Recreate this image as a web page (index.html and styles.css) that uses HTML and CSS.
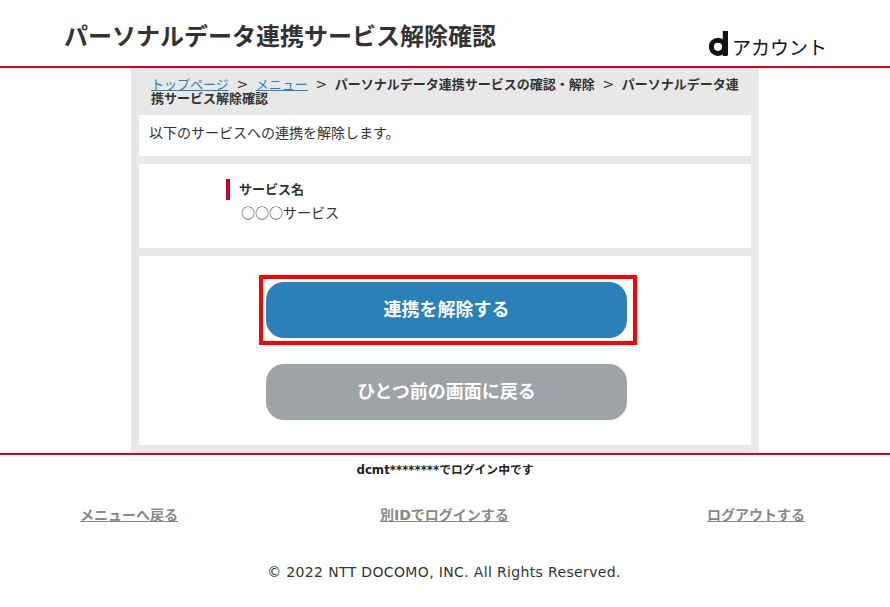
FILE: index.html
```html
<!DOCTYPE html>
<html lang="ja">
<head>
<meta charset="utf-8">
<title>パーソナルデータ連携サービス解除確認</title>
<link rel="stylesheet" href="styles.css">
</head>
<body>
<header class="header">
  <h1 class="title">パーソナルデータ連携サービス解除確認</h1>
  <div class="brand">
    <svg class="brand-d" width="19" height="25" viewBox="0 0 19 25"><circle cx="9" cy="15.800" r="6.600" fill="none" stroke="#111" stroke-width="5"/><path d="M13.800 0H19V21.500C19 23.500 18.800 24.500 18.400 25H13.800Z" fill="#111"/></svg>
    <span class="brand-text">アカウント</span>
  </div>
</header>
<main class="main">
  <nav class="crumbs"><a href="#">トップページ</a><span class="sep">&gt;</span><a href="#">メニュー</a><span class="sep">&gt;</span>パーソナルデータ連携サービスの確認・解除<span class="sep">&gt;</span>パーソナルデータ連携サービス解除確認</nav>
  <section class="box box-intro">以下のサービスへの連携を解除します。</section>
  <section class="box box-service">
    <h2 class="label">サービス名</h2>
    <p class="value">○○○サービス</p>
  </section>
  <section class="box box-actions">
    <div class="highlight"><a class="btn btn-blue" href="#">連携を解除する</a></div>
    <a class="btn btn-gray" href="#">ひとつ前の画面に戻る</a>
  </section>
</main>
<footer class="footer">
  <p class="login">dcmt********でログイン中です</p>
  <div class="links">
    <a href="#">メニューへ戻る</a>
    <a href="#">別IDでログインする</a>
    <a href="#">ログアウトする</a>
  </div>
  <p class="copy">© 2022 NTT DOCOMO, INC. All Rights Reserved.</p>
</footer>
</body>
</html>
```

FILE: styles.css
```css
* { box-sizing: border-box; }
html, body { margin: 0; padding: 0; }
body {
  background: #fff;
  color: #333;
  font-family: "DejaVu Sans", "Noto Sans CJK JP", sans-serif;
  height: 607px;
  overflow: hidden;
}
.header {
  height: 68px;
  border-bottom: 2px solid #c70025;
  display: flex;
  justify-content: space-between;
  padding: 0 63px 0 64px;
}
.title {
  margin: 19px 0 0;
  font-size: 24px;
  line-height: 32px;
  font-weight: 700;
  color: #333;
  font-family: "Noto Sans CJK JP", sans-serif;
}
.brand { display: flex; align-items: flex-start; padding-top: 31px; gap: 4px; }
.brand-text {
  font-family: "Noto Sans CJK JP", sans-serif;
  font-size: 19px;
  line-height: 32px;
  color: #111;
}
.main {
  width: 628px;
  height: 385px;
  margin: 0 0 0 131px;
  padding: 0 8px;
  background: #e8e8e8;
}
.crumbs {
  height: 47px;
  padding: 9px 8px 0 12px;
  font-size: 13px;
  line-height: 14px;
  font-weight: 700;
  color: #333;
  font-family: "Noto Sans CJK JP", sans-serif;
}
.crumbs a { color: #2a80b9; font-weight: 400; text-underline-offset: 1px; }
.sep {
  display: inline-block;
  width: 27px;
  text-align: center;
  font-family: "DejaVu Sans", sans-serif;
  font-size: 14px;
  font-weight: 400;
}
.box { background: #fff; margin-bottom: 8px; }
.box-intro {
  height: 41px;
  padding: 7px 10px;
  font-family: "Noto Sans CJK JP", sans-serif;
  font-size: 14px;
  line-height: 20px;
}
.box-service { height: 84px; padding: 15px 87px; font-family: "Noto Sans CJK JP", sans-serif; }
.label {
  margin: 0;
  height: 21px;
  border-left: 4px solid #c70025;
  padding-left: 9px;
  font-size: 13px;
  line-height: 19px;
  font-weight: 700;
}
.value { margin: 2px 0 0 15px; font-size: 14px; line-height: 20px; }
.box-actions {
  height: 189px;
  margin: 0;
  display: flex;
  flex-direction: column;
  align-items: flex-start;
  padding: 19px 0 0 120px;
  gap: 19px;
}
.highlight { border: 4px solid #f00; padding: 3px; width: 378px; height: 70px; }
.btn {
  display: flex;
  align-items: center;
  justify-content: center;
  width: 361px;
  height: 56px;
  padding-bottom: 4px;
  border-radius: 18px;
  color: #fff;
  font-family: "Noto Sans CJK JP", sans-serif;
  font-size: 18px;
  font-weight: 700;
  text-decoration: none;
}
.btn-blue { background: #2a80b9; }
.btn-gray { background: #9ea3a7; margin-left: 7px; }
.footer { border-top: 2px solid #c70025; }
.login {
  margin: 7px 0 0;
  text-align: center;
  font-size: 11.800px;
  line-height: 16px;
  font-weight: 700;
  color: #222;
}
.links {
  display: grid;
  grid-template-columns: 300px 327px auto;
  padding: 27px 0 0 80px;
}
.links a {
  justify-self: start;
  font-size: 14px;
  line-height: 20px;
  font-weight: 700;
  color: #888;
}
.copy {
  margin: 37px 0 0;
  padding-right: 2px;
  text-align: center;
  font-size: 14px;
  line-height: 20px;
  letter-spacing: .35px;
  color: #333;
}
```
